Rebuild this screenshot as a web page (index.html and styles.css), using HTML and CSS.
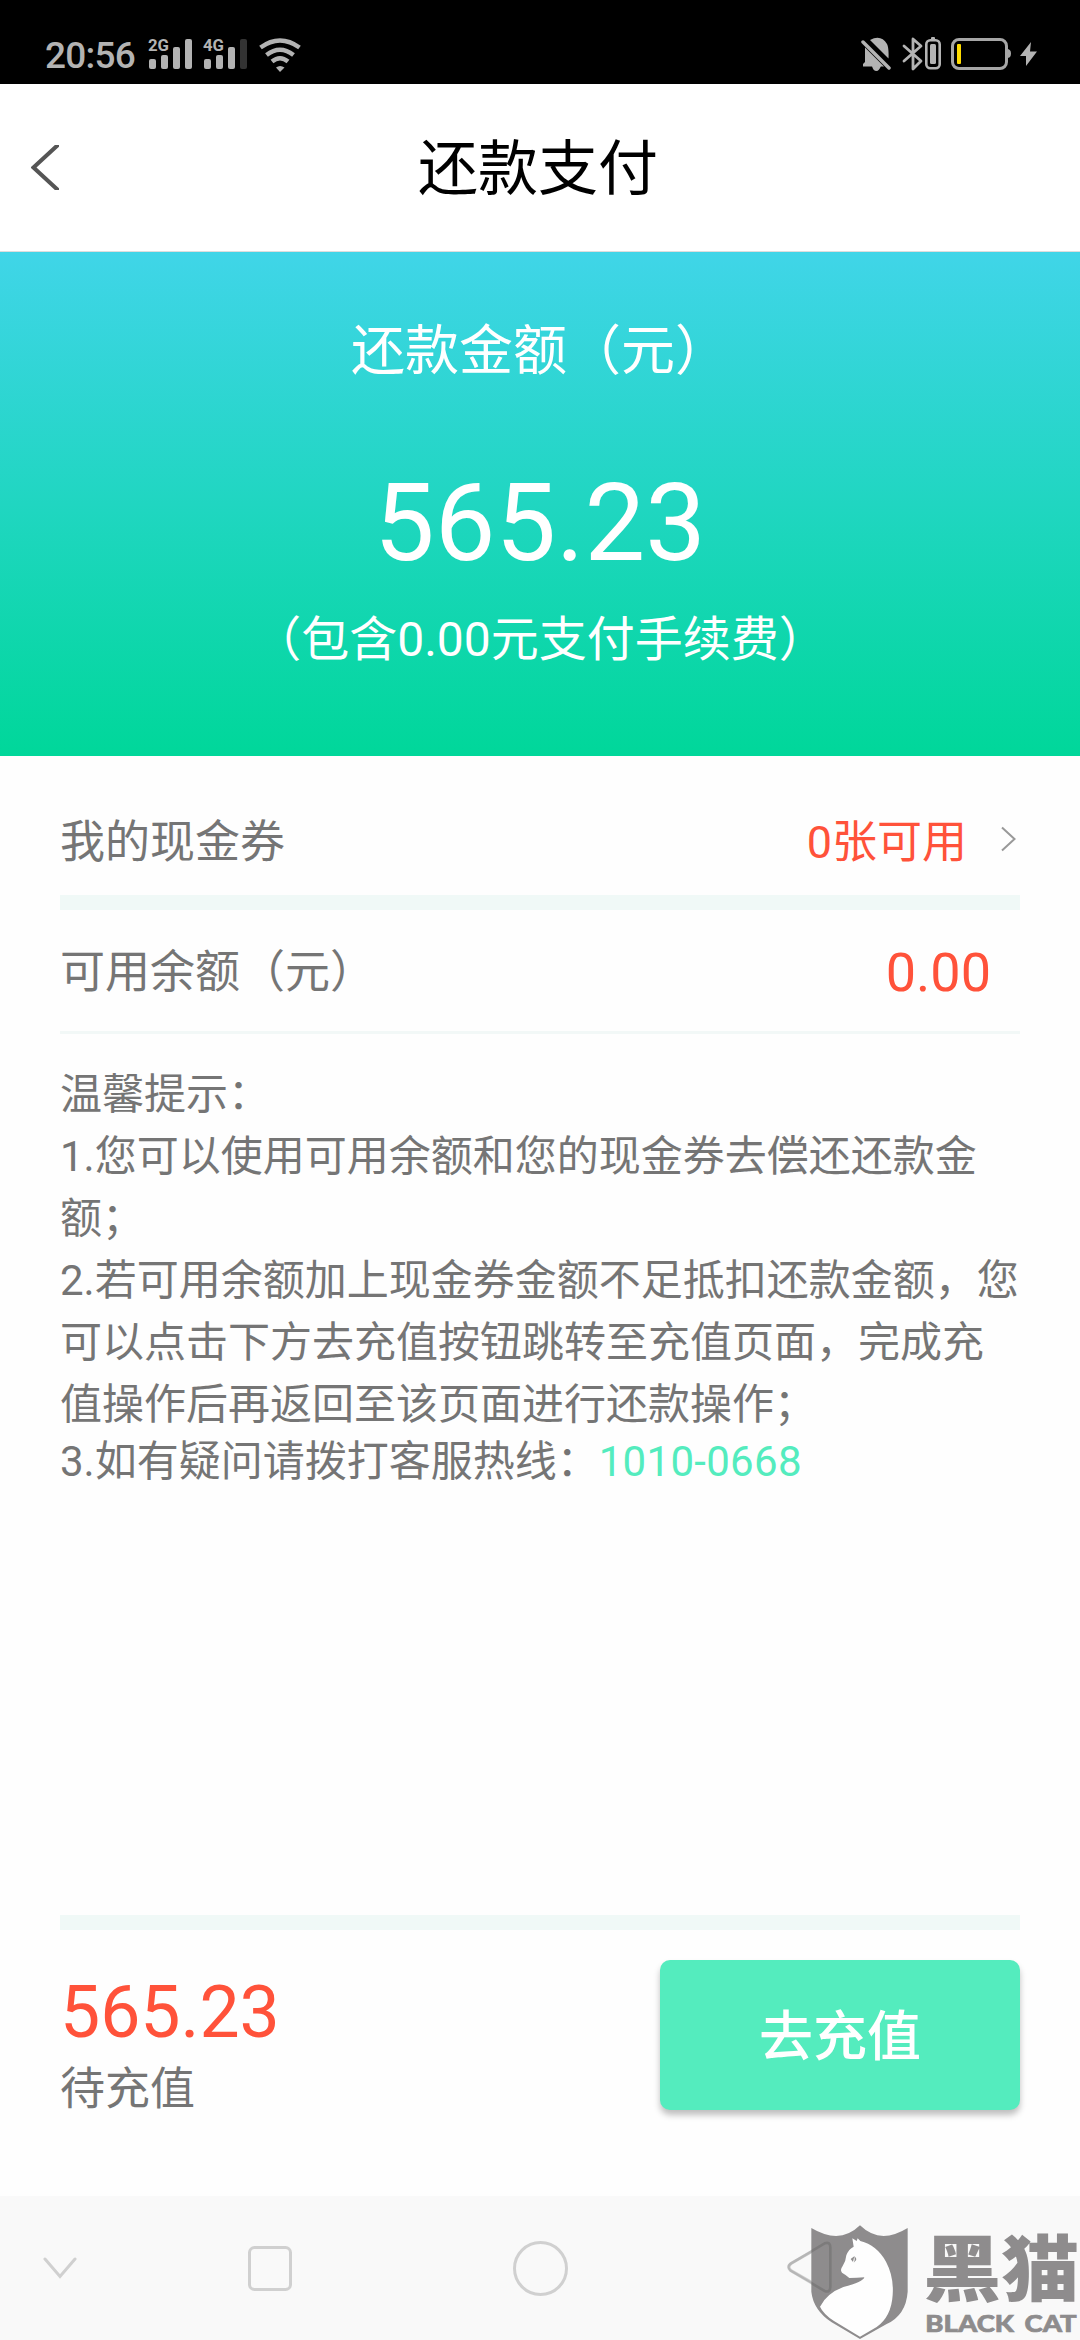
FILE: index.html
```html
<!DOCTYPE html>
<html lang="zh-CN">
<head>
    <meta charset="UTF-8">
    <meta name="viewport" content="width=device-width, initial-scale=1.0">
    <title>还款支付</title>
    <link rel="stylesheet" href="styles.css">
</head>
<body>
    <div class="page">
        <div class="status">
            <span class="time">20:56</span>
            <svg class="signal" width="44" height="32" viewBox="0 0 44 32">
                <text x="0" y="13" textLength="21" lengthAdjust="spacingAndGlyphs">2G</text>
                <rect x="1" y="21" width="7" height="10" rx="2"/>
                <rect x="13" y="17" width="7" height="14" rx="2"/>
                <rect x="25" y="9" width="7" height="22" rx="2"/>
                <rect x="37" y="1" width="7" height="30" rx="2"/>
            </svg>
            <svg class="signal signal-2" width="44" height="32" viewBox="0 0 44 32">
                <text x="0" y="13" textLength="21" lengthAdjust="spacingAndGlyphs">4G</text>
                <rect x="1" y="21" width="7" height="10" rx="2"/>
                <rect x="13" y="17" width="7" height="14" rx="2"/>
                <rect x="25" y="9" width="7" height="22" rx="2"/>
                <rect class="off" x="37" y="1" width="7" height="30" rx="2"/>
            </svg>
            <svg class="wifi" width="42" height="34" viewBox="0 0 42 34">
                <path d="M1.5 9.5Q21 -4.500 40.500 9.500M7.500 17Q21 6.500 34.500 17M13 23.500Q21 17 29 23.500" fill="none" stroke="#b3b3b3" stroke-width="4.500"/>
                <path d="M17 29.500Q21 26.500 25.500 29.500L21 34Z" fill="#b3b3b3"/>
            </svg>
            <div class="status-right">
                <svg width="30" height="36" viewBox="0 0 30 36">
                    <path d="M4 11.500L23 30.500H2V28L4 26ZM9 4Q20 -2 26 8Q28 12 27.500 22.500Z" fill="#b3b3b3"/>
                    <path d="M11 30H20Q18 35 15.500 35Q12 35 11 30Z" fill="#b3b3b3"/>
                    <path d="M2 6L28 32" stroke="#b3b3b3" stroke-width="3.500" stroke-linecap="round"/>
                </svg>
                <svg class="bluetooth" width="40" height="36" viewBox="0 0 40 36">
                    <path d="M2 10L19 25L11 33V3L19 10L2 25" fill="none" stroke="#b3b3b3" stroke-width="2.800" stroke-linejoin="round" stroke-linecap="round"/>
                    <rect x="24.300" y="4.300" width="13.400" height="28" rx="4" fill="none" stroke="#b3b3b3" stroke-width="2.600"/>
                    <rect x="28" y="8" width="6" height="20" rx="1.500" fill="#b3b3b3"/>
                    <rect x="29" y="1" width="4" height="3" rx="1" fill="#b3b3b3"/>
                </svg>
                <svg class="battery" width="60" height="32" viewBox="0 0 60 32">
                    <rect x="1.500" y="1.500" width="54" height="29" rx="6.500" fill="none" stroke="#a6a6a6" stroke-width="3"/>
                    <path d="M56 11Q60 11 60 15.500Q60 20 56 20Z" fill="#a6a6a6"/>
                    <rect x="6" y="6" width="4" height="20" rx="1" fill="#ffdc00"/>
                </svg>
                <svg class="bolt" width="17" height="24" viewBox="0 0 17 24">
                    <path d="M11 0L0 14H6L6 24L17 9.500H10Z" fill="#b3b3b3"/>
                </svg>
            </div>
        </div>

        <div class="header">
            <svg class="back" width="28" height="45" viewBox="0 0 28 45">
                <path d="M29 -2L2.500 22.500L29 47" fill="none" stroke="#555" stroke-width="4"/>
            </svg>
            <h1>还款支付</h1>
        </div>

        <div class="amount">
            <div class="amount-label">还款金额（元）</div>
            <div class="amount-num">565.23</div>
            <div class="amount-fee">（包含0.00元支付手续费）</div>
        </div>

        <div class="content">
            <div class="row coupon">
                <span>我的现金券</span>
                <span class="red">0张可用</span>
                <svg width="15" height="26" viewBox="0 0 15 26">
                    <path d="M1 1.500L13.500 13L1 24.500" fill="none" stroke="#999" stroke-width="2"/>
                </svg>
            </div>
            <div class="row balance">
                <span>可用余额（元）</span>
                <span class="red">0.00</span>
            </div>
            <div class="tips">
                <p>温馨提示：</p>
                <p>1.您可以使用可用余额和您的现金券去偿还还款金额；</p>
                <p>2.若可用余额加上现金券金额不足抵扣还款金额，您可以点击下方去充值按钮跳转至充值页面，完成充值操作后再返回至该页面进行还款操作；</p>
                <p class="hotline">3.如有疑问请拨打客服热线：<a>1010-0668</a></p>
            </div>
            <div class="pay">
                <div>
                    <div class="pay-num">565.23</div>
                    <div class="pay-label">待充值</div>
                </div>
                <button class="btn">去充值</button>
            </div>
        </div>

        <div class="nav">
            <div class="nav-hide">
                <svg width="34" height="22" viewBox="0 0 34 22"><path d="M2 2L17 19.500L32 2"/></svg>
            </div>
            <div class="nav-recent">
                <svg width="44" height="45" viewBox="0 0 44 45"><rect x="1.500" y="1.500" width="41" height="42" rx="5"/></svg>
            </div>
            <div class="nav-home">
                <svg width="55" height="55" viewBox="0 0 55 55"><circle cx="27.500" cy="27.500" r="26"/></svg>
            </div>
            <div class="nav-back">
                <svg width="46" height="54" viewBox="0 0 46 54"><path d="M38 3L4 22.500Q0 26 4 29.500L38 49Q43.500 51 43.500 45V7Q43.500 1 38 3Z"/></svg>
            </div>
        </div>

        <!-- 黑猫 logo -->
        <svg class="logo" width="320" height="150" viewBox="0 0 960 450">
            <path class="shield" d="M154 114Q240 165 300 106Q360 165 443 114V305Q438 375 380 402L300 447L215 397Q160 360 154 305Z"/>
            <path class="cat" d="M281 170L277 145L290 153L293 145L301 153Q350 165 378 215Q402 260 398 315Q394 380 350 411L300 440L222 393Q190 372 180 350Q200 310 250 291Q310 276 313 262Q290 264 268 264Q260 256 246 248Q239 240 248 228Q258 212 259 196Q266 177 281 170Z"/>
            <path class="shield" d="M272 207L283 199L279 216ZM282 199Q291 204 288 211L281 218Q287 208 282 199Z"/>
            <path d="M194 160L90 222Q80 232 90 241L194 303Q211 309 211 290V172Q211 154 194 160Z" fill="none" stroke="#000" stroke-opacity=".12" stroke-width="8"/>
            <text class="logo-cn" x="490" y="316" textLength="468" lengthAdjust="spacingAndGlyphs">黑猫</text>
            <text class="logo-en" x="496" y="427" textLength="454" lengthAdjust="spacingAndGlyphs">BLACK CAT</text>
        </svg>
    </div>
</body>
</html>
```
FILE: styles.css
```css
*{
    margin: 0;
    padding: 0;
    box-sizing: border-box;
}
body{
    font-family: Roboto, "Noto Sans CJK SC", sans-serif;
    color: #757575;
    background-color: #fefefe;
    text-spacing-trim: space-all;
}
svg{
    display: block;
    flex-shrink: 0;
}
.page{
    width: 1080px;
    height: 2340px;
    position: relative;
    display: flex;
    flex-direction: column;
    overflow: hidden;
}

/* status bar */
.status{
    height: 84px;
    padding: 38px 43px 0 45px;
    display: flex;
    align-items: flex-start;
    background-color: #000;
    color: #b3b3b3;
}
.time{
    width: 103px;
    font-size: 37px;
    font-weight: 500;
    letter-spacing: -.8px;
    line-height: 36px;
}
.signal{
    fill: #b3b3b3;
    overflow: visible;
}
.signal text{
    font: bold 17px Roboto, sans-serif;
}
.signal .off{
    fill: #333;
}
.signal-2{
    margin-left: 11px;
}
.wifi{
    margin-left: 12px;
}
.status-right{
    display: flex;
    align-items: center;
    margin: -2px 0 0 auto;
}
.bluetooth{
    margin-left: 11px;
}
.battery{
    margin-left: 9px;
}
.bolt{
    margin-left: 9px;
}

/* header */
.header{
    height: 168px;
    display: flex;
    align-items: center;
    padding: 0 31px;
    background-color: #fff;
    border-bottom: 1px solid #ddd;
}
.header h1{
    flex: 1;
    margin-right: 32px;
    padding-top: 5px;
    text-align: center;
    font-size: 60px;
    font-weight: 400;
    line-height: 80px;
    color: #000;
}

.amount{
    height: 504px;
    padding-top: 64px;
    text-align: center;
    color: #fff;
    background: linear-gradient(#40d5e8, #00d79a);
}
.amount-label{
    font-size: 54px;
    line-height: 72px;
}
.amount-num{
    margin-top: 65px;
    font-size: 108px;
    line-height: 140px;
}
.amount-fee{
    margin-top: 12px;
    font-size: 48px;
    line-height: 70px;
}

.content{
    flex: 1;
    margin: 0 60px;
    display: flex;
    flex-direction: column;
}
.row{
    display: flex;
    align-items: center;
    font-size: 45px;
}
.row .red{
    margin-left: auto;
}
.red{
    color: #ff523a;
}
.coupon{
    height: 154px;
    padding: 25px 4px 0 0;
    border-bottom: 15px solid #f0f9f7;
}
.coupon svg{
    margin-left: 34px;
    margin-bottom: -2px;
}
.balance{
    height: 124px;
    padding-right: 29px;
    border-bottom: 3px solid #f2f8f7;
}
.balance span{
    margin-top: -4px;
}
.balance .red{
    margin-top: 4px;
    font-size: 54px;
}
.tips{
    padding-top: 30px;
    font-size: 42px;
    line-height: 62px;
}
.tips .hotline{
    line-height: 52px;
}
.tips a{
    color: #54ecbe;
    letter-spacing: .3px;
}

.pay{
    height: 281px;
    margin-top: auto;
    padding-top: 30px;
    display: flex;
    justify-content: space-between;
    border-top: 15px solid #f0f9f7;
}
.pay-num{
    padding-top: 11px;
    font-size: 71.500px;
    line-height: 84px;
    color: #ff523a;
}
.pay-label{
    font-size: 45px;
    line-height: 70px;
}
.btn{
    width: 360px;
    height: 150px;
    padding-bottom: 5px;
    border: none;
    border-radius: 10px;
    background-color: #54ecbe;
    color: #fff;
    font: 500 54px Roboto, "Noto Sans CJK SC", sans-serif;
    box-shadow: 0 5px 6px rgba(0, 0, 0, .25);
}

/* system navigation */
.nav{
    height: 144px;
    display: flex;
    background-color: #f9f9f9;
}
.nav div{
    display: flex;
    align-items: center;
    justify-content: center;
}
.nav svg{
    fill: none;
    stroke: #d0d0d0;
    stroke-width: 3;
    stroke-linecap: round;
}
.nav-hide{
    width: 120px;
}
.nav-recent, .nav-back{
    width: 300px;
}
.nav-home{
    width: 240px;
}

.logo{
    position: absolute;
    right: 0;
    bottom: 0;
}
.shield, .logo text{
    fill: #8e8c8d;
}
.cat{
    fill: #fefefe;
}
.logo-cn{
    font: 900 214px "Noto Sans CJK SC", sans-serif;
}
.logo-en{
    font: 900 68px Lato, sans-serif;
    stroke: #8e8c8d;
    stroke-width: 2;
    word-spacing: 10px;
}
```
